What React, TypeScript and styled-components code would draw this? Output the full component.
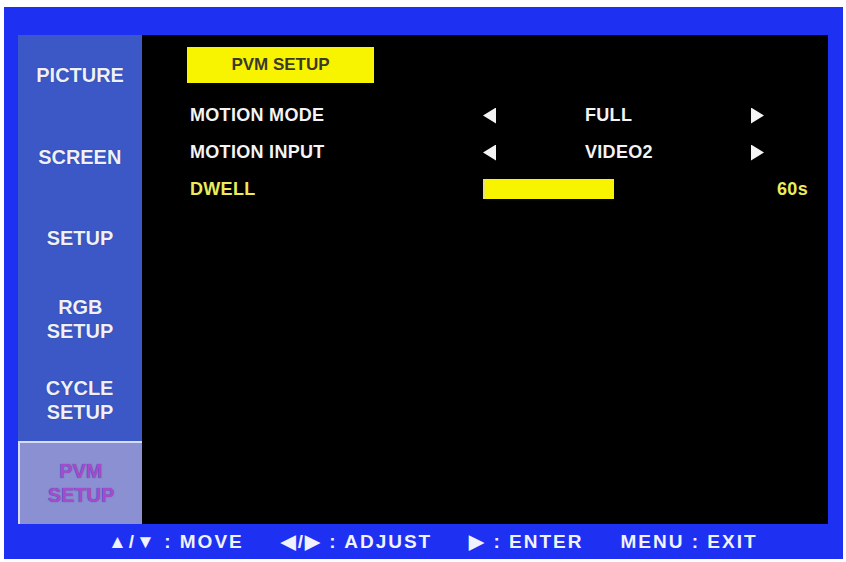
import React from "react";
import styled, { createGlobalStyle } from "styled-components";

const Global = createGlobalStyle`
  html, body { margin: 0; padding: 0; background: #ffffff; }
  body { font-family: "Liberation Sans", Arial, sans-serif; }
`;

const Frame = styled.div`
  margin: 7px 0 0 4px;
  width: 839px;
  height: 552px;
  background: #1e30f2;
  box-sizing: border-box;
  padding: 28px 15px 0 14px;
  display: flex;
  flex-direction: column;
`;

const Screen = styled.div`
  display: flex;
  height: 489px;
`;

const Sidebar = styled.div`
  width: 124px;
  background: #3b58c6;
  display: flex;
  flex-direction: column;
`;

const TabItem = styled.div<{ $active?: boolean }>`
  flex: 1;
  display: flex;
  flex-direction: column;
  align-items: center;
  justify-content: center;
  box-sizing: border-box;
  background: ${(p) => (p.$active ? "#8b90d2" : "transparent")};
  border-top: ${(p) => (p.$active ? "2px solid #d4dcf6" : "none")};
  border-left: ${(p) => (p.$active ? "2px solid #d4dcf6" : "none")};
  color: ${(p) => (p.$active ? "#a64ad0" : "#eef1fb")};
`;

const TabLine = styled.div`
  font-weight: bold;
  font-size: 21px;
  line-height: 24.5px;
  text-align: center;
  transform: scaleX(0.95);
  text-shadow: 0 0 1px rgba(20, 30, 90, 0.7);
`;

const Panel = styled.div`
  flex: 1;
  background: #000000;
  padding: 12px 20px 0 45px;
  display: flex;
  flex-direction: column;
`;

const TitleBox = styled.div`
  width: 187px;
  height: 36px;
  background: #f8f400;
  color: #3a3a2c;
  font-weight: bold;
  font-size: 17px;
  display: flex;
  align-items: center;
  justify-content: center;
  margin-bottom: 14px;
`;

const Row = styled.div`
  display: flex;
  align-items: center;
  height: 37px;
  padding-left: 3px;
  font-weight: bold;
  font-size: 18px;
  letter-spacing: 0.3px;
`;

const Label = styled.div<{ $hl?: boolean }>`
  width: 293px;
  color: ${(p) => (p.$hl ? "#ecec5a" : "#f4f4f4")};
`;

const ArrowCell = styled.div<{ $w: number }>`
  width: ${(p) => p.$w}px;
  display: flex;
  align-items: center;
`;

const Tri = styled.span<{ $dir: "left" | "right" }>`
  display: block;
  width: 13px;
  height: 16px;
  background: #f4f4f4;
  clip-path: ${(p) =>
    p.$dir === "left"
      ? "polygon(100% 0, 100% 100%, 0 50%)"
      : "polygon(0 0, 0 100%, 100% 50%)"};
`;

const Value = styled.div`
  width: 166px;
  color: #f4f4f4;
`;

const Bar = styled.div`
  width: 131px;
  height: 20px;
  margin-top: -2px;
  background: #f8f400;
  border-left: 2px solid #e8e070;
  box-sizing: border-box;
`;

const EndValue = styled.div`
  flex: 1;
  text-align: right;
  color: #ecec5a;
`;

const Help = styled.div`
  flex: 1;
  display: flex;
  align-items: center;
  padding-left: 90px;
  gap: 37px;
  color: #f0f2ff;
  font-weight: bold;
  font-size: 19px;
  letter-spacing: 2px;
`;

const HelpItem = styled.span`
  white-space: pre;
`;

const tabs: { label: string[]; active?: boolean }[] = [
  { label: ["PICTURE"] },
  { label: ["SCREEN"] },
  { label: ["SETUP"] },
  { label: ["RGB", "SETUP"] },
  { label: ["CYCLE", "SETUP"] },
  { label: ["PVM", "SETUP"], active: true },
];

export default function App() {
  return (
    <>
      <Global />
      <Frame>
        <Screen>
          <Sidebar>
            {tabs.map((t, i) => (
              <TabItem key={i} $active={t.active}>
                {t.label.map((l, j) => (
                  <TabLine key={j}>{l}</TabLine>
                ))}
              </TabItem>
            ))}
          </Sidebar>
          <Panel>
            <TitleBox>PVM SETUP</TitleBox>
            <Row>
              <Label>MOTION MODE</Label>
              <ArrowCell $w={102}>
                <Tri $dir="left" />
              </ArrowCell>
              <Value>FULL</Value>
              <ArrowCell $w={13}>
                <Tri $dir="right" />
              </ArrowCell>
            </Row>
            <Row>
              <Label>MOTION INPUT</Label>
              <ArrowCell $w={102}>
                <Tri $dir="left" />
              </ArrowCell>
              <Value>VIDEO2</Value>
              <ArrowCell $w={13}>
                <Tri $dir="right" />
              </ArrowCell>
            </Row>
            <Row>
              <Label $hl>DWELL</Label>
              <Bar />
              <EndValue>60s</EndValue>
            </Row>
          </Panel>
        </Screen>
        <Help>
          <HelpItem>▲/▼ : MOVE</HelpItem>
          <HelpItem>◀/▶ : ADJUST</HelpItem>
          <HelpItem>▶ : ENTER</HelpItem>
          <HelpItem>MENU : EXIT</HelpItem>
        </Help>
      </Frame>
    </>
  );
}
